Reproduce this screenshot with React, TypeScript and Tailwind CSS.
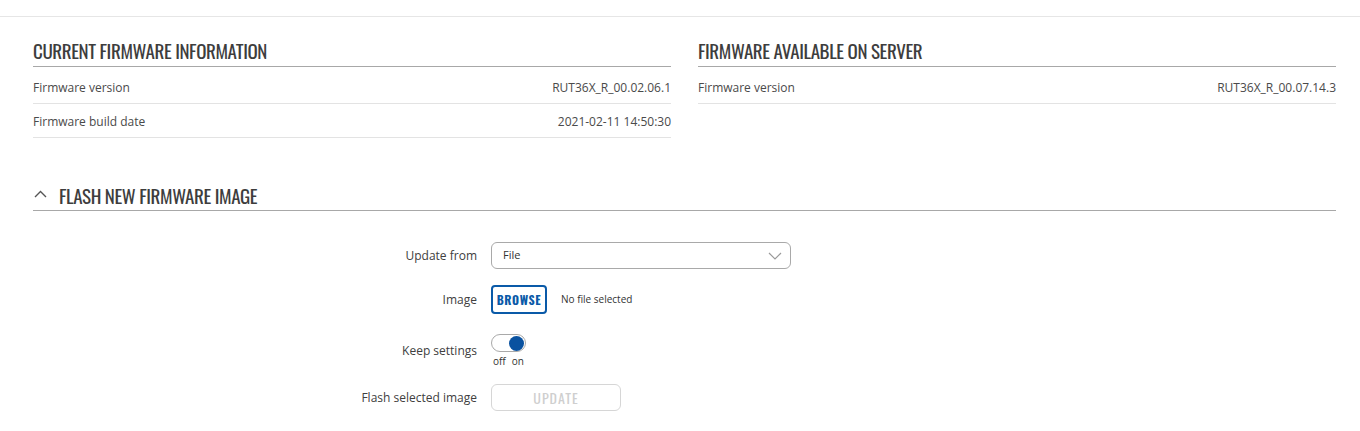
const head = "font-['Oswald','DejaVu_Sans_Condensed','Liberation_Sans_Narrow',sans-serif]";
const body = "font-['Open_Sans','Noto_Sans',sans-serif]";

function InfoRow({ label, value }: { label: string; value: string }) {
  return (
    <div className="flex h-[34px] items-center justify-between border-b border-[#e3e3e3] pt-[2px] text-[12px] text-[#4a4a4a]">
      <span>{label}</span>
      <span>{value}</span>
    </div>
  );
}

function Section({ title, children }: { title: string; children: React.ReactNode }) {
  return (
    <div>
      <h2 className={`${head} h-[50px] border-b border-[#a8a8a8] pt-[22px] text-[19px] uppercase leading-[22px] tracking-[-0.4px] text-[#3d3d3d]`}>
        {title}
      </h2>
      <div className="pt-[3px]">{children}</div>
    </div>
  );
}

function FormRow({ label, children }: { label: string; children: React.ReactNode }) {
  return (
    <div className="flex items-center">
      <div className="w-[444px] text-right text-[12px] text-[#404040]">{label}</div>
      <div className="ml-[14px]">{children}</div>
    </div>
  );
}

export default function App() {
  return (
    <div className={`${body} min-h-[431px] bg-white`}>
      <div className="h-[17px] border-b border-[#e6e6e6]" />
      <div className="pl-[33px] pr-[24px]">
        <div className="grid grid-cols-2 gap-x-[27px]">
          <Section title="Current firmware information">
            <InfoRow label="Firmware version" value="RUT36X_R_00.02.06.1" />
            <InfoRow label="Firmware build date" value="2021-02-11 14:50:30" />
          </Section>
          <Section title="Firmware available on server">
            <InfoRow label="Firmware version" value="RUT36X_R_00.07.14.3" />
          </Section>
        </div>

        <div className="mt-[34px] flex h-[39px] items-end border-b border-[#a8a8a8] pb-[4px]">
          <svg width="13" height="8" viewBox="0 0 13 8" className="mb-[8px] ml-[1px]">
            <path d="M1 7 L6.5 1.5 L12 7" fill="none" stroke="#555" strokeWidth="1.4" />
          </svg>
          <h2 className={`${head} ml-[12px] text-[19px] uppercase leading-[22px] tracking-[-0.4px] text-[#3d3d3d]`}>
            Flash new firmware image
          </h2>
        </div>

        <div className="mt-[31px] flex flex-col">
          <FormRow label="Update from">
            <div className="flex h-[27px] w-[300px] items-center justify-between rounded-[6px] border border-[#a9a9a9] pl-[11px] pr-[8px] text-[11px] text-[#333]">
              <span>File</span>
              <svg width="14" height="8" viewBox="0 0 14 8">
                <path d="M1 1 L7 7 L13 1" fill="none" stroke="#9a9a9a" strokeWidth="1.2" />
              </svg>
            </div>
          </FormRow>
          <div className="h-[16px]" />
          <FormRow label="Image">
            <div className="flex items-center">
              <button className={`${head} h-[29px] w-[56px] rounded-[4px] border-2 border-[#0a5aa8] text-[12px] font-bold tracking-[0.6px] text-[#0a5aa8]`}>
                BROWSE
              </button>
              <span className="ml-[14px] text-[10px] text-[#333]">No file selected</span>
            </div>
          </FormRow>
          <div className="h-[20px]" />
          <FormRow label="Keep settings">
            <div className="flex flex-col items-start">
              <div className="flex h-[18px] w-[35px] items-center justify-end rounded-full border border-[#a9a9a9] bg-white pr-[1px]">
                <div className="h-[15px] w-[15px] rounded-full bg-[#0a52a0]" />
              </div>
              <div className="mt-[3px] flex gap-[6px] pl-[2px] text-[10px] leading-[13px] text-[#333]">
                <span>off</span>
                <span>on</span>
              </div>
            </div>
          </FormRow>
          <div className="h-[16px]" />
          <FormRow label="Flash selected image">
            <button className={`${head} h-[27px] w-[130px] rounded-[6px] border border-[#d6d6d6] text-[14px] tracking-[1px] text-[#cfcfcf]`}>
              UPDATE
            </button>
          </FormRow>
        </div>
      </div>
    </div>
  );
}
